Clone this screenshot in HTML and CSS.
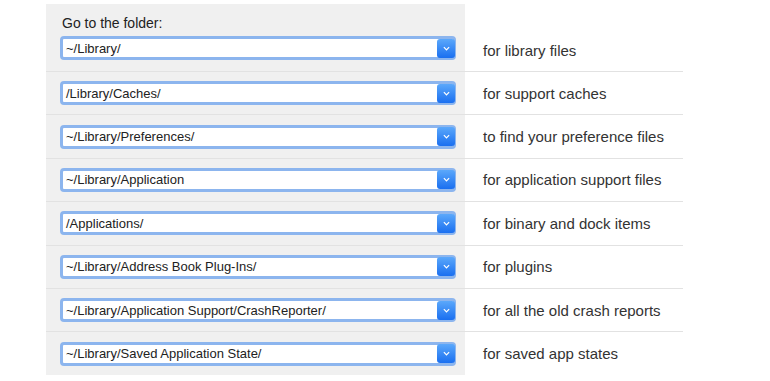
FILE: index.html
```html
<!DOCTYPE html>
<html lang="en">
<head>
  <meta charset="UTF-8" />
  <title>Library folders</title>
  <link rel="stylesheet" href="styles.css">
</head>
<body>

  <div class="table">

    <div class="row first">
      <div class="cell-left">
        <div class="label">Go to the folder:</div>
        <div class="select"><span>~/Library/</span><i class="arrow"><svg viewBox="0 0 8 5"><path d="M1 1 L4 4 L7 1"/></svg></i></div>
      </div>
      <div class="cell-right">for library files</div>
    </div>

    <div class="row">
      <div class="cell-left">
        <div class="select"><span>/Library/Caches/</span><i class="arrow"><svg viewBox="0 0 8 5"><path d="M1 1 L4 4 L7 1"/></svg></i></div>
      </div>
      <div class="cell-right">for support caches</div>
    </div>

    <div class="row">
      <div class="cell-left">
        <div class="select"><span>~/Library/Preferences/</span><i class="arrow"><svg viewBox="0 0 8 5"><path d="M1 1 L4 4 L7 1"/></svg></i></div>
      </div>
      <div class="cell-right">to find your preference files</div>
    </div>

    <div class="row">
      <div class="cell-left">
        <div class="select"><span>~/Library/Application</span><i class="arrow"><svg viewBox="0 0 8 5"><path d="M1 1 L4 4 L7 1"/></svg></i></div>
      </div>
      <div class="cell-right">for application support files</div>
    </div>

    <div class="row">
      <div class="cell-left">
        <div class="select"><span>/Applications/</span><i class="arrow"><svg viewBox="0 0 8 5"><path d="M1 1 L4 4 L7 1"/></svg></i></div>
      </div>
      <div class="cell-right">for binary and dock items</div>
    </div>

    <div class="row">
      <div class="cell-left">
        <div class="select"><span>~/Library/Address Book Plug-Ins/</span><i class="arrow"><svg viewBox="0 0 8 5"><path d="M1 1 L4 4 L7 1"/></svg></i></div>
      </div>
      <div class="cell-right">for plugins</div>
    </div>

    <div class="row">
      <div class="cell-left">
        <div class="select"><span>~/Library/Application Support/CrashReporter/</span><i class="arrow"><svg viewBox="0 0 8 5"><path d="M1 1 L4 4 L7 1"/></svg></i></div>
      </div>
      <div class="cell-right">for all the old crash reports</div>
    </div>

    <div class="row">
      <div class="cell-left">
        <div class="select"><span>~/Library/Saved Application State/</span><i class="arrow"><svg viewBox="0 0 8 5"><path d="M1 1 L4 4 L7 1"/></svg></i></div>
      </div>
      <div class="cell-right">for saved app states</div>
    </div>

  </div>

</body>
</html>
```

FILE: styles.css
```css
body {
  margin: 0;
  font-family: "Liberation Sans", "Helvetica", sans-serif;
  background-color: #fff;
  color: #333;
}

.table {
  width: 637px;
  margin: 4px 0 0 46px;
}

/* 每一行 */
.row {
  display: grid;
  grid-template-columns: 419px 1fr;
  height: 43.4px;
  box-sizing: border-box;
  border-top: 1px solid #e2e2e2;
}
.row.first {
  height: 67px;
  border-top: none;
}

.cell-left {
  background-color: #f0f0f0;
  padding: 0 9px 0 14px;
  display: flex;
  flex-direction: column;
  justify-content: center;
}
.row.first .cell-left {
  justify-content: flex-start;
  padding-top: 11px;
}

.label {
  font-size: 14px;
  color: #222;
  margin: 0 0 5px 2px;
}

.cell-right {
  display: flex;
  align-items: center;
  padding-left: 18px;
  font-size: 15px;
  color: #333;
}
.row.first .cell-right {
  align-items: flex-end;
  padding-bottom: 12px;
}

/* 下拉框 */
.select {
  display: flex;
  align-items: center;
  height: 24px;
  box-sizing: border-box;
  background-color: #fff;
  border: 3px solid #8cb5ee;
  border-radius: 4px;
  font-size: 13px;
  color: #222;
}
.select span {
  flex: 1;
  padding-left: 3px;
  white-space: nowrap;
}
.select .arrow {
  width: 18px;
  height: 19px;
  margin-right: -2px;
  border-radius: 3px;
  background: linear-gradient(#5ba8fb, #1a6ff0);
  display: flex;
  justify-content: center;
  align-items: center;
}
.select .arrow svg {
  width: 7px;
  height: 5px;
  fill: none;
  stroke: #fff;
  stroke-width: 1.4;
}
```
